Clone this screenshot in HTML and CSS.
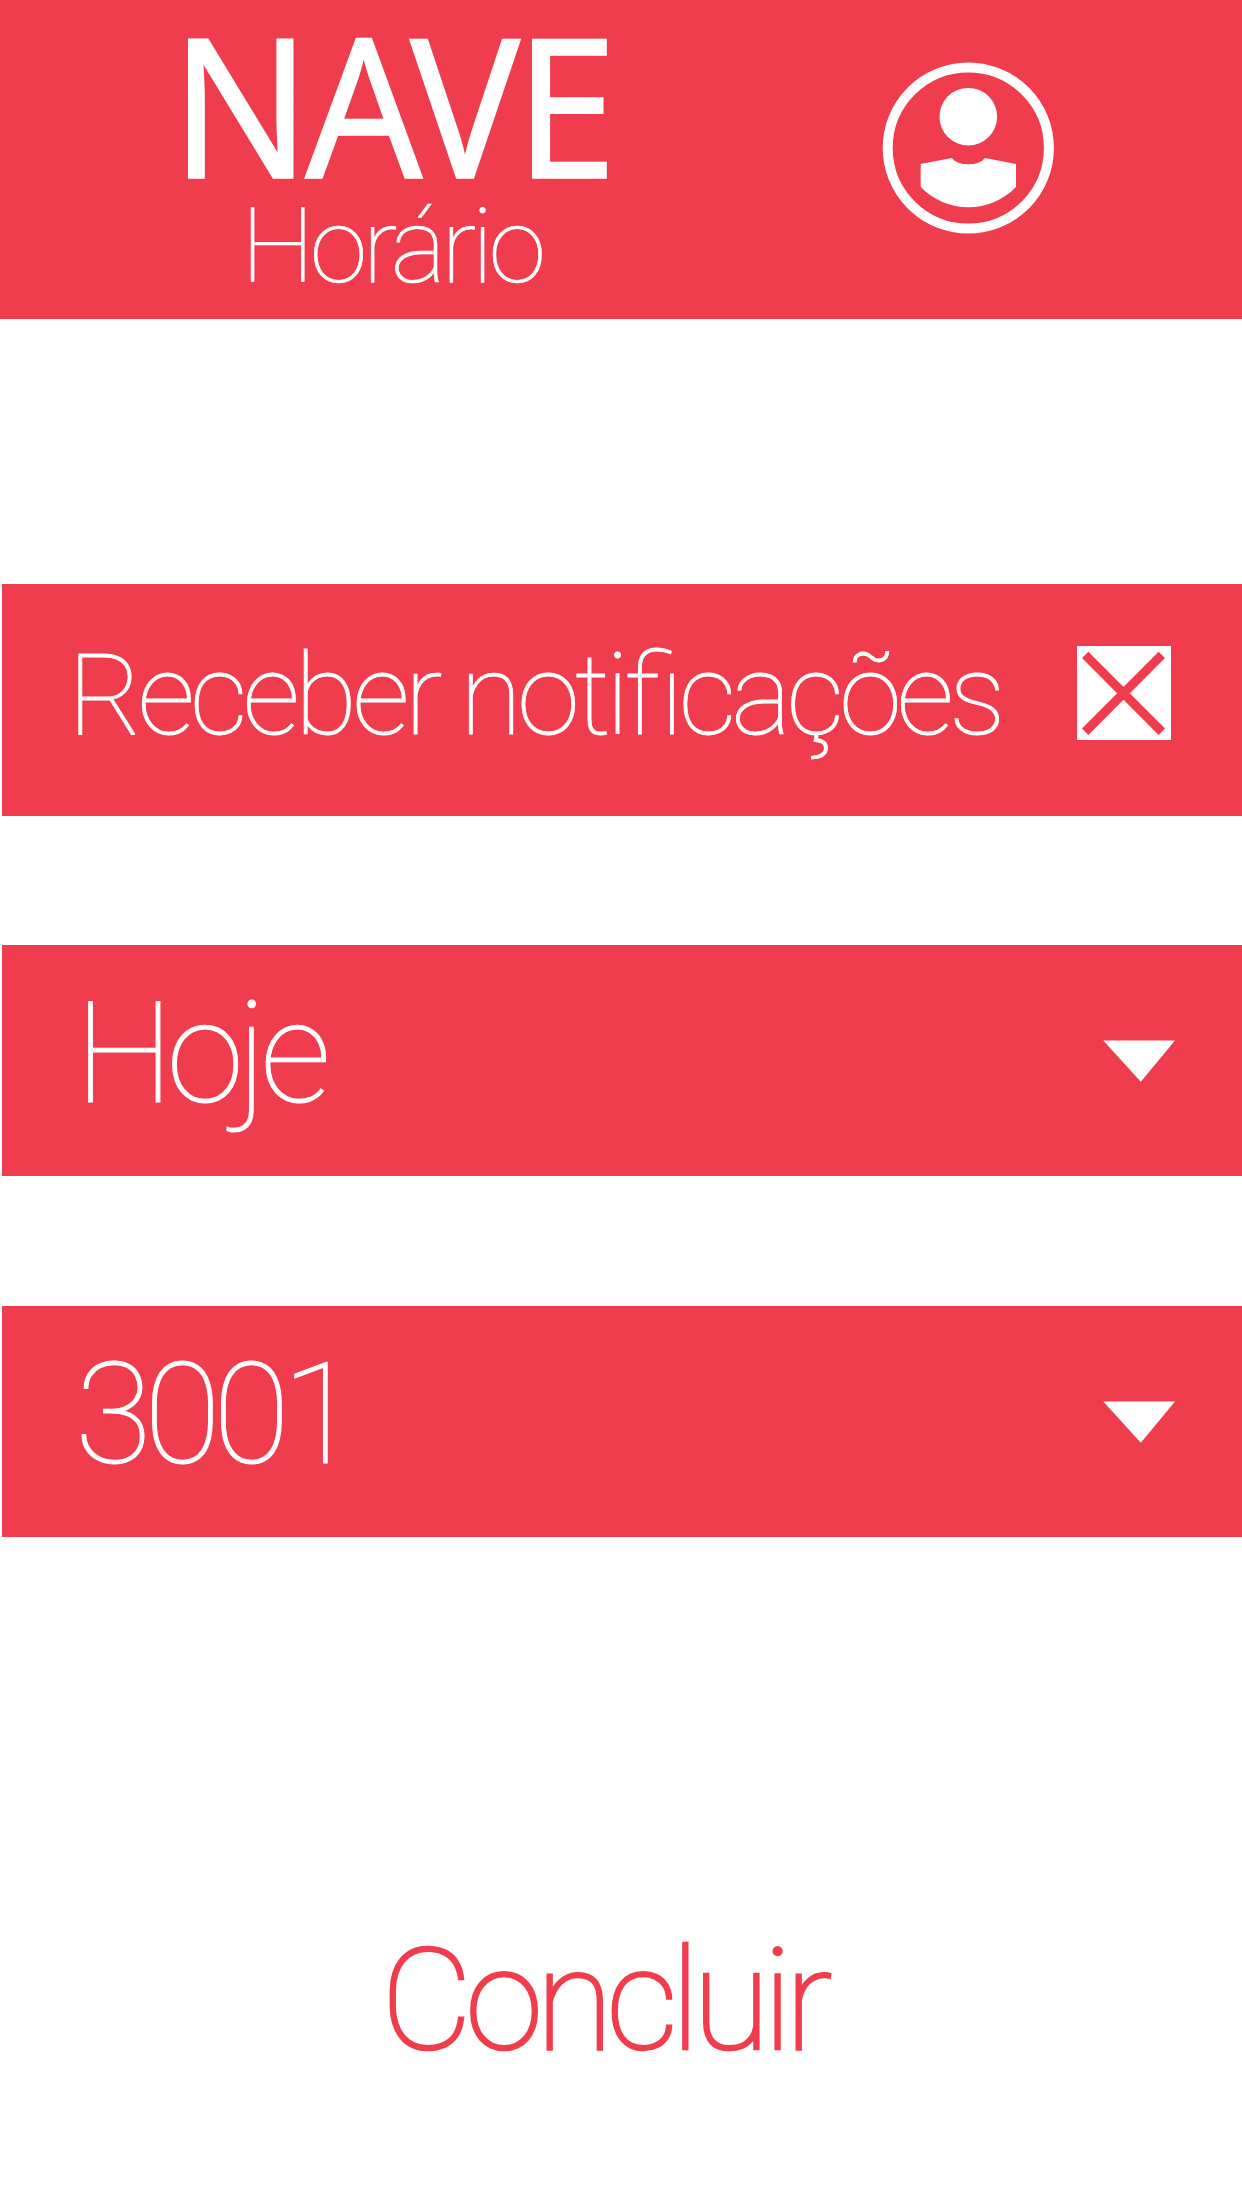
FILE: index.html
```html
<!DOCTYPE html>
<html lang="pt-BR">
<head>
<meta charset="utf-8">
<title>NAVE Horário</title>
<link rel="stylesheet" href="styles.css">
</head>
<body>
<header class="header">
  <div class="brand">
    <h1 class="brand-name">NAVE</h1>
    <p class="brand-sub">Horário</p>
  </div>
  <svg class="avatar" viewBox="0 0 172 172" aria-hidden="true">
    <circle cx="86.3" cy="86" r="80.6" fill="none" stroke="#fff" stroke-width="10"/>
    <circle cx="86.3" cy="54.7" r="28.8" fill="#fff"/>
    <path d="M38.7 102 L69.7 96 Q75 102.3 86.3 102.3 Q98 102.3 103 96 L134 102 V125 A66 66 0 0 1 38.7 125Z" fill="#fff"/>
  </svg>
</header>
<main class="settings">
  <label class="row row-notify">
    <span class="row-text">Receber notificações</span>
    <svg class="check" viewBox="0 0 94 94"><rect width="94" height="94" fill="#fff"/><path d="M8.2 8.9 L84.8 85.8 M84.8 8.9 L8.2 85.8" stroke="#f03d4d" stroke-width="9"/></svg>
  </label>
  <div class="row row-select">
    <span class="row-text">Hoje</span>
    <svg class="arrow" viewBox="0 0 72 42"><path d="M.3 .4H72L37.8 41.8Z" fill="#fff"/></svg>
  </div>
  <div class="row row-select row-class">
    <span class="row-text">3001</span>
    <svg class="arrow" viewBox="0 0 72 42"><path d="M.3 .4H72L37.8 41.8Z" fill="#fff"/></svg>
  </div>
</main>
<button class="done">Concluir</button>
</body>
</html>
```
FILE: styles.css
```css
* { box-sizing: border-box; margin: 0; padding: 0; }
body { width: 1242px; height: 2208px; overflow: hidden; background: #fff; font-family: Roboto, sans-serif; font-weight: 100; }
.header { height: 319px; background: #f03d4d; display: flex; padding: 0 188px 0 171px; justify-content: space-between; align-items: flex-start; color: #fff; }
.brand { width: 480px; }
.brand-name { font: 400 194.5px/205px "Noto Sans", sans-serif; letter-spacing: -5.4px; white-space: nowrap; transform: scaleX(.943); transform-origin: left; -webkit-text-stroke: 1.6px currentColor; }
.brand-sub { font-size: 104.4px; line-height: 83px; letter-spacing: -4.6px; padding-left: 70px; -webkit-text-stroke: .7px currentColor; }
.avatar { width: 172px; height: 172px; margin-top: 62px; }
.settings { padding: 265.4px 0 0 2px; display: flex; flex-direction: column; gap: 129.4px; }
.row { height: 231.3px; background: #f03d4d; color: #fff; display: flex; justify-content: space-between; align-items: flex-start; padding: 0 67px 0 73px; white-space: nowrap; }
.row-notify { padding: 0 71px 0 66px; }
.row-notify .row-text { font-size: 113.8px; line-height: 222px; letter-spacing: -5px; font-feature-settings: "liga" 1; -webkit-text-stroke: .8px currentColor; }
.row-select .row-text { font-size: 140.4px; line-height: 218px; letter-spacing: -7px; -webkit-text-stroke: 1px currentColor; }
.row-class .row-text { letter-spacing: -7.8px; }
.check { width: 94px; height: 94px; margin-top: 61.6px; }
.arrow { width: 72px; height: 42px; margin-top: 95px; }
.done { display: block; margin: 364px 0 0 381px; border: 0; background: none; color: #f03d4d; font-family: Roboto, sans-serif; font-weight: 100; font-size: 141px; line-height: 200px; letter-spacing: -7px; -webkit-text-stroke: 2.6px currentColor; }
```
